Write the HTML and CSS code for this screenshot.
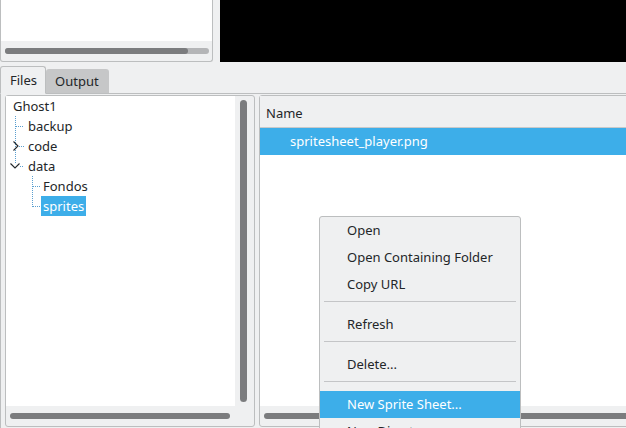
FILE: index.html
```html
<!DOCTYPE html>
<html>
<head>
<meta charset="utf-8">
<link rel="stylesheet" href="styles.css">
</head>
<body>
<div class="top">
  <div class="top-panel">
    <div class="top-view"></div>
    <div class="top-scroll"><div class="hbar-track"><div class="hbar-handle"></div></div></div>
  </div>
  <div class="video"></div>
</div>

<div class="tabbar">
  <div class="tab active">Files</div>
  <div class="tab">Output</div>
  <div class="tab-fill"></div>
</div>

<div class="pane">
  <div class="tree-panel">
    <div class="tree-view">
      <div class="row root"><span class="label">Ghost1</span></div>
      <div class="row">
        <svg class="g1" width="22" height="20"><line class="dot" x1="9.5" y1="0" x2="9.5" y2="20"/><line class="dot" x1="10" y1="10.5" x2="18" y2="10.5"/></svg>
        <span class="label">backup</span>
      </div>
      <div class="row">
        <svg class="g1" width="22" height="20"><line class="dot" x1="9.5" y1="0" x2="9.5" y2="20"/><line class="dot" x1="13" y1="10.5" x2="18" y2="10.5"/><polyline class="chev" points="7.5,5.5 12,10 7.5,14.5"/></svg>
        <span class="label">code</span>
      </div>
      <div class="row">
        <svg class="g1" width="22" height="20"><line class="dot" x1="9.5" y1="0" x2="9.5" y2="7"/><line class="dot" x1="14" y1="10.5" x2="18" y2="10.5"/><polyline class="chev" points="4.5,7.5 9,12 13.5,7.5"/></svg>
        <span class="label">data</span>
      </div>
      <div class="row">
        <svg class="g2" width="37" height="20"><line class="dot" x1="26.5" y1="0" x2="26.5" y2="20"/><line class="dot" x1="27" y1="10.5" x2="34" y2="10.5"/></svg>
        <span class="label">Fondos</span>
      </div>
      <div class="row">
        <svg class="g2" width="35" height="20"><line class="dot" x1="26.5" y1="0" x2="26.5" y2="11"/><line class="dot" x1="27" y1="10.5" x2="34" y2="10.5"/></svg>
        <span class="label selected">sprites</span>
      </div>
    </div>
    <div class="vscroll"><div class="vbar"></div></div>
    <div class="hscroll"><div class="hbar"></div></div>
    <div class="corner"></div>
  </div>

  <div class="list-panel">
    <div class="list-view">
      <div class="list-header">Name</div>
      <div class="list-row selected">spritesheet_player.png</div>
    </div>
    <div class="hscroll right"><div class="hbar"></div></div>
  </div>
</div>

<div class="menu">
  <div class="item">Open</div>
  <div class="item">Open Containing Folder</div>
  <div class="item">Copy URL</div>
  <div class="sep"></div>
  <div class="item">Refresh</div>
  <div class="sep"></div>
  <div class="item">Delete...</div>
  <div class="sep"></div>
  <div class="item hl">New Sprite Sheet...</div>
  <div class="item">New Directory...</div>
</div>
</body>
</html>
```

FILE: styles.css
```css
html, body {
  margin: 0;
  padding: 0;
}
body {
  width: 626px;
  height: 428px;
  overflow: hidden;
  background: #eff0f1;
  font-family: "Noto Sans", "Open Sans", sans-serif;
  font-size: 13px;
  color: #232629;
  position: relative;
}

/* top area */
.top {
  display: flex;
  height: 62px;
  gap: 7px;
}
.top-panel {
  width: 211px;
  border: 1px solid #bcbebf;
  border-top: none;
  border-radius: 0 0 3px 3px;
  display: flex;
  flex-direction: column;
  background: #eff0f1;
}
.top-view {
  height: 41px;
  background: #ffffff;
}
.top-scroll {
  flex: 1;
  padding: 7px 3px 0 4px;
}
.hbar-track {
  height: 6px;
  border-radius: 3px;
  background: #b4b5b7;
}
.hbar-handle {
  width: 183px;
  height: 6px;
  border-radius: 3px;
  background: #7b7c7e;
}
.video {
  flex: 1;
  background: #000;
}

/* tabs */
.tabbar {
  display: flex;
  align-items: flex-end;
  margin-top: 5px;
  height: 27px;
}
.tab {
  height: 24px;
  line-height: 25px;
  padding: 0 9px;
  background: #c6c7c8;
  border-radius: 3px 3px 0 0;
  border-bottom: 1px solid #bcbebf;
}
.tab.active {
  height: 26px;
  line-height: 27px;
  background: #eff0f1;
  border: 1px solid #bcbebf;
  border-bottom: 1px solid #eff0f1;
  width: 26px;
}
.tab.active + .tab {
  width: 45px;
  margin-left: 0;
}
.tab-fill {
  flex: 1;
  border-bottom: 1px solid #bcbebf;
}

/* pane */
.pane {
  display: flex;
  gap: 4px;
  padding: 1px 0 0 4px;
  border-left: 1px solid #bcbebf;
  height: 334px;
}
.tree-panel {
  width: 248px;
  height: 330px;
  border: 1px solid #bcbebf;
  border-radius: 3px;
  background: #eff0f1;
  display: grid;
  grid-template-columns: 229px 19px;
  grid-template-rows: 310px 20px;
  flex-shrink: 0;
}
.tree-view {
  background: #fff;
  overflow: hidden;
}
.row {
  display: flex;
  height: 20px;
  align-items: center;
}
.row svg {
  flex-shrink: 0;
  display: block;
}
.row.root {
  padding-left: 7px;
}
.label {
  line-height: 20px;
  white-space: nowrap;
}
.label.selected {
  background: #3daee9;
  color: #fff;
  padding: 0 2px;
}
.dot {
  stroke: #5b9fcf;
  stroke-width: 1;
  stroke-dasharray: 1 1;
}
.chev {
  fill: none;
  stroke: #232629;
  stroke-width: 1.1;
}
.vscroll {
  padding: 4px 0 0 5px;
}
.vbar {
  width: 7px;
  height: 302px;
  border-radius: 4px;
  background: #7b7c7e;
}
.hscroll {
  padding: 7px 0 0 4px;
}
.hbar {
  width: 220px;
  height: 6px;
  border-radius: 3px;
  background: #7b7c7e;
}
.hscroll.right .hbar {
  width: 400px;
}
.list-panel {
  flex: 1;
  min-width: 400px;
  height: 330px;
  border: 1px solid #bcbebf;
  border-radius: 3px;
  background: #eff0f1;
  display: flex;
  flex-direction: column;
}
.list-view {
  height: 310px;
  background: #fff;
}
.list-header {
  height: 32px;
  line-height: 34px;
  padding-left: 6px;
  background: #eff0f1;
  border-bottom: 1px solid #c8c9ca;
  box-sizing: border-box;
}
.list-row {
  height: 27px;
  line-height: 27px;
  padding-left: 30px;
}
.list-row.selected {
  background: #3daee9;
  color: #fff;
}

/* context menu */
.menu {
  position: absolute;
  left: 319px;
  top: 216px;
  width: 200px;
  background: #eff0f1;
  border: 1px solid #bcbebf;
  border-radius: 3px;
}
.item {
  height: 27px;
  line-height: 27px;
  padding-left: 27px;
  white-space: nowrap;
}
.item.hl {
  background: #3daee9;
  color: #fff;
}
.sep {
  height: 1px;
  margin: 3px 4px 9px 4px;
  background: #c4c5c7;
}
```
